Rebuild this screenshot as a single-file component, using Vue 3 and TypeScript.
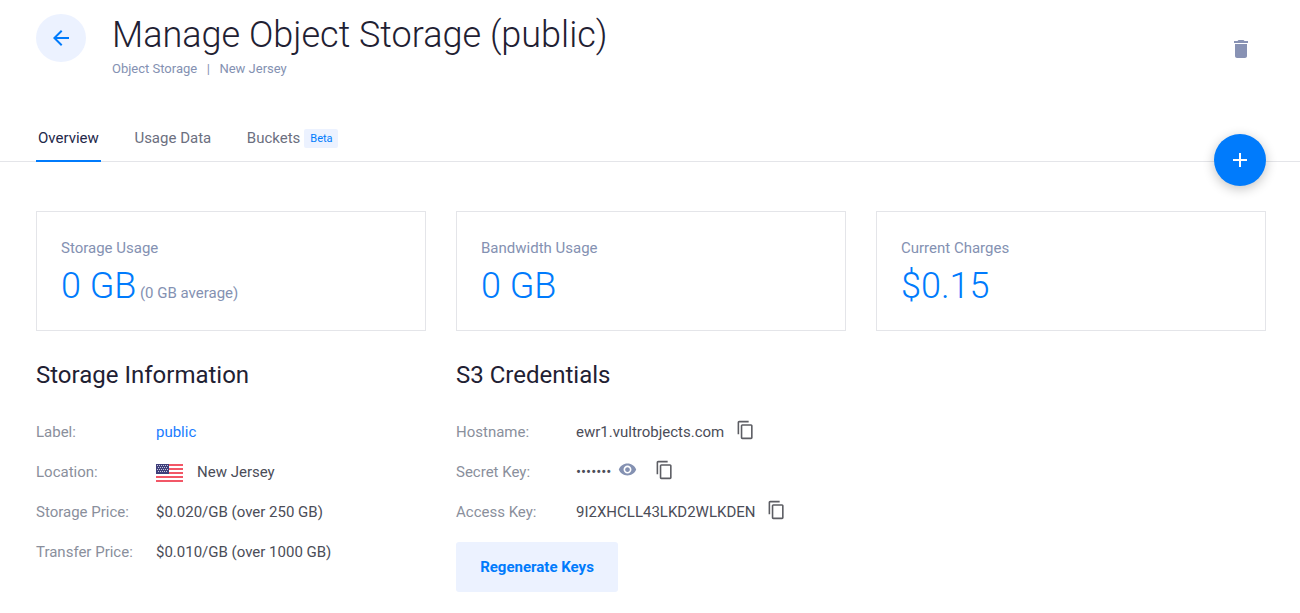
<script setup lang="ts">
interface Stat { label: string; value: string; note?: string }
interface Row { label: string; value: string; kind?: 'link' | 'flag' | 'secret'; copy?: boolean }

const stats: Stat[] = [
  { label: 'Storage Usage', value: '0 GB', note: '(0 GB average)' },
  { label: 'Bandwidth Usage', value: '0 GB' },
  { label: 'Current Charges', value: '$0.15' },
]

const info: Row[] = [
  { label: 'Label:', value: 'public', kind: 'link' },
  { label: 'Location:', value: 'New Jersey', kind: 'flag' },
  { label: 'Storage Price:', value: '$0.020/GB (over 250 GB)' },
  { label: 'Transfer Price:', value: '$0.010/GB (over 1000 GB)' },
]

const credentials: Row[] = [
  { label: 'Hostname:', value: 'ewr1.vultrobjects.com', copy: true },
  { label: 'Secret Key:', value: '•••••••', kind: 'secret', copy: true },
  { label: 'Access Key:', value: '9I2XHCLL43LKD2WLKDEN', copy: true },
]

// Alternating rows of six and five stars
const stars: { x: number; y: number }[] = []
for (let r = 0; r < 4; r++) {
  for (let c = 0; c < 6 - (r % 2); c++) {
    stars.push({ x: 1 + c * 2 + (r % 2), y: 1 + r * 2 })
  }
}
</script>

<template>
  <div class="page">
    <header class="header">
      <a class="back">
        <svg width="24" height="24" viewBox="0 0 24 24"><path d="M20 11H7.83l5.59-5.59L12 4l-8 8 8 8 1.41-1.41L7.83 13H20v-2z" /></svg>
      </a>
      <div class="heading">
        <h1>Manage Object Storage (public)</h1>
        <div class="crumbs"><span>Object Storage</span><span class="bar">|</span><span>New Jersey</span></div>
      </div>
      <svg class="trash" width="24" height="24" viewBox="0 0 24 24"><path d="M6 19c0 1.1.9 2 2 2h8c1.100 0 2-.9 2-2V7H6v12zM19 4h-3.500l-1-1h-5l-1 1H5v2h14V4z" /></svg>
    </header>

    <nav class="tabs">
      <a class="tab active">Overview</a>
      <a class="tab">Usage Data</a>
      <a class="tab">Buckets<span class="badge">Beta</span></a>
      <button class="fab">
        <svg width="24" height="24" viewBox="0 0 24 24"><path d="M19 13h-6v6h-2v-6H5v-2h6V5h2v6h6v2z" /></svg>
      </button>
    </nav>

    <section class="stats">
      <div v-for="s in stats" :key="s.label" class="card">
        <div class="card-label">{{ s.label }}</div>
        <div class="card-line"><span class="card-value">{{ s.value }}</span><span v-if="s.note" class="note">{{ s.note }}</span></div>
      </div>
    </section>

    <section class="details">
      <div class="column">
        <h2>Storage Information</h2>
        <div v-for="r in info" :key="r.label" class="row">
          <span class="label">{{ r.label }}</span>
          <svg v-if="r.kind === 'flag'" class="flag" width="27" height="18" viewBox="0 0 27 18" shape-rendering="crispEdges">
            <rect width="27" height="18" fill="#fff" />
            <rect v-for="n in 5" :key="n" y="0" width="27" height="2" :transform="`translate(0 ${(n - 1) * 4})`" fill="#f25767" />
            <rect width="13" height="10" fill="#3f3f7a" />
            <rect v-for="(s, i) in stars" :key="'s' + i" :x="s.x" :y="s.y" width="1" height="1" fill="#c4c4dc" />
          </svg>
          <span class="value" :class="{ link: r.kind === 'link' }">{{ r.value }}</span>
        </div>
      </div>
      <div class="column">
        <h2>S3 Credentials</h2>
        <div v-for="r in credentials" :key="r.label" class="row">
          <span class="label">{{ r.label }}</span>
          <span class="value">{{ r.value }}</span>
          <svg v-if="r.kind === 'secret'" class="eye" width="19" height="19" viewBox="0 0 24 24"><path d="M12 4.500C7 4.500 2.730 7.610 1 12c1.730 4.390 6 7.500 11 7.500s9.270-3.110 11-7.500c-1.730-4.390-6-7.500-11-7.500zM12 17c-2.760 0-5-2.240-5-5s2.240-5 5-5 5 2.240 5 5-2.240 5-5 5zm0-8c-1.660 0-3 1.340-3 3s1.340 3 3 3 3-1.340 3-3-1.340-3-3-3z" /></svg>
          <svg v-if="r.copy" class="copy" width="19" height="20" viewBox="0 0 24 24" preserveAspectRatio="none"><path d="M16 1H4c-1.100 0-2 .9-2 2v14h2V3h12V1zm3 4H8c-1.100 0-2 .9-2 2v14c0 1.100.9 2 2 2h11c1.100 0 2-.9 2-2V7c0-1.100-.9-2-2-2zm0 16H8V7h11v14z" /></svg>
        </div>
        <button class="regen">Regenerate Keys</button>
      </div>
    </section>
  </div>
</template>

<style>
body { margin: 0; background: #fff; }
</style>

<style scoped>
.page {
  width: 1300px;
  height: 613px;
  overflow: hidden;
  box-sizing: border-box;
  font-family: Roboto, "Liberation Sans", sans-serif;
  font-size: 15px;
  color: #4b4d58;
}
svg { display: block; flex: none; }
button { border: 0; padding: 0; font: inherit; }
.header { display: flex; align-items: flex-start; height: 114px; padding: 0 47px 0 36px; }
.back {
  display: flex;
  align-items: center;
  justify-content: center;
  width: 50px;
  height: 48px;
  margin-top: 14px;
  border-radius: 50%;
  background: #ecf2ff;
  fill: #007bfc;
}
.heading { flex: 1; padding: 14px 0 0 26px; }
h1 { margin: 0; font-size: 36px; line-height: 42px; font-weight: 300; color: #1f2133; }
.crumbs { margin-top: 4px; font-size: 13px; line-height: 18px; color: #8491b2; }
.bar { margin: 0 9.5px; }
.trash { margin-top: 37px; fill: #8892b4; }
.tabs {
  position: relative;
  display: flex;
  gap: 31.6px;
  height: 47px;
  padding-left: 36px;
  border-bottom: 1px solid #e4e5e9;
}
.tab {
  display: flex;
  align-items: center;
  box-sizing: border-box;
  height: 48px;
  padding: 2px 2px 0;
  border-bottom: 2px solid transparent;
  color: #6c6f80;
}
.tab.active { color: #23284a; border-color: #007bfc; }
.badge {
  height: 19px;
  margin-left: 4px;
  padding: 0 5.300px 0 6px;
  border-radius: 2px;
  background: #ecf2ff;
  color: #007bfc;
  font-size: 11px;
  line-height: 19px;
}
.fab {
  position: absolute;
  right: 34px;
  top: 20px;
  display: flex;
  align-items: center;
  justify-content: center;
  width: 52px;
  height: 52px;
  border-radius: 50%;
  background: #007bfc;
  fill: #fff;
  box-shadow: 0 3px 12px rgba(0, 0, 0, 0.24);
}
.stats { display: grid; grid-template-columns: repeat(3, 390px); gap: 30px; padding: 49px 36px 0; }
.card { height: 120px; box-sizing: border-box; border: 1px solid #e4e5e9; padding: 26px 24px 0; color: #8491b2; }
.card-label { line-height: 20px; }
.card-line { display: flex; align-items: baseline; line-height: 42px; margin-top: 7px; }
.card-value { font-size: 36px; font-weight: 300; color: #007bfc; }
.note { margin-left: 3.500px; }
.details { display: grid; grid-template-columns: 390px 390px; gap: 30px; padding: 28px 36px 0; }
h2 { margin: 0 0 21px; font-size: 24px; line-height: 32px; font-weight: 400; color: #1f2133; }
.row { display: flex; align-items: center; height: 40px; }
.label { width: 120px; color: #8a8f9c; }
.link { color: #1a7cff; }
.flag { margin: 1px 14px 0 0; }
.eye { margin: -5px 0 0 7px; fill: #8491b2; }
.copy { margin: -4px 0 0 11.600px; fill: #5c5d63; }
.eye + .copy { margin-left: 17.600px; }
.regen {
  display: block;
  width: 162px;
  height: 50px;
  margin-top: 10px;
  border-radius: 3px;
  background: #ecf2ff;
  color: #007bfc;
  font-weight: 700;
}
</style>
